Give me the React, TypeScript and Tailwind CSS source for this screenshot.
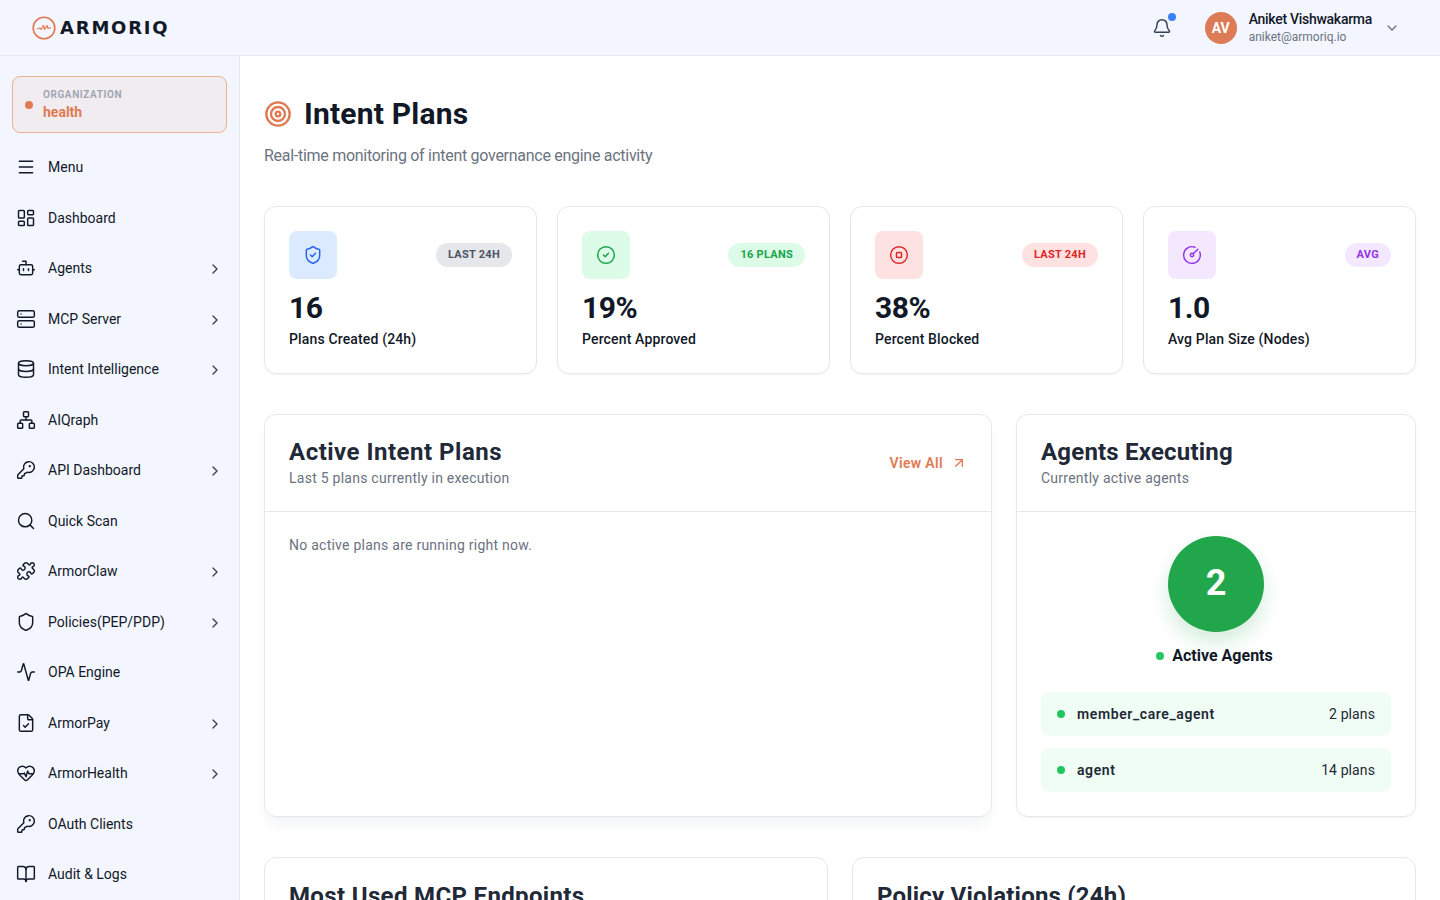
import {
  Activity,
  ArrowUpRight,
  Bell,
  BookOpen,
  Bot,
  ChevronDown,
  ChevronRight,
  CircleCheck,
  CircleGauge,
  CircleStop,
  Database,
  FileCheck,
  HeartPulse,
  KeyRound,
  LayoutDashboard,
  Menu,
  Network,
  Puzzle,
  Search,
  Server,
  Shield,
  ShieldCheck,
  Target,
} from "lucide-react";

const navItems = [
  { label: "Menu", icon: Menu },
  { label: "Dashboard", icon: LayoutDashboard },
  { label: "Agents", icon: Bot, sub: true },
  { label: "MCP Server", icon: Server, sub: true },
  { label: "Intent Intelligence", icon: Database, sub: true },
  { label: "AIQraph", icon: Network },
  { label: "API Dashboard", icon: KeyRound, sub: true },
  { label: "Quick Scan", icon: Search },
  { label: "ArmorClaw", icon: Puzzle, sub: true },
  { label: "Policies(PEP/PDP)", icon: Shield, sub: true },
  { label: "OPA Engine", icon: Activity },
  { label: "ArmorPay", icon: FileCheck, sub: true },
  { label: "ArmorHealth", icon: HeartPulse, sub: true },
  { label: "OAuth Clients", icon: KeyRound },
  { label: "Audit & Logs", icon: BookOpen },
];

const stats = [
  {
    icon: ShieldCheck,
    iconClass: "bg-[#dbeafe] text-[#2563eb]",
    badge: "LAST 24H",
    badgeClass: "bg-[#e5e7eb] text-[#4b5563]",
    value: "16",
    label: "Plans Created (24h)",
  },
  {
    icon: CircleCheck,
    iconClass: "bg-[#dcfce7] text-[#16a34a]",
    badge: "16 PLANS",
    badgeClass: "bg-[#dcfce7] text-[#16a34a]",
    value: "19%",
    label: "Percent Approved",
  },
  {
    icon: CircleStop,
    iconClass: "bg-[#fee2e2] text-[#dc2626]",
    badge: "LAST 24H",
    badgeClass: "bg-[#fee2e2] text-[#dc2626]",
    value: "38%",
    label: "Percent Blocked",
  },
  {
    icon: CircleGauge,
    iconClass: "bg-[#f3e8ff] text-[#9333ea]",
    badge: "AVG",
    badgeClass: "bg-[#f3e8ff] text-[#9333ea]",
    value: "1.0",
    label: "Avg Plan Size (Nodes)",
  },
];

const agents = [
  { name: "member_care_agent", plans: "2 plans" },
  { name: "agent", plans: "14 plans" },
];

function Logo() {
  return (
    <div className="flex items-center gap-[4px]">
      <svg width="24" height="24" viewBox="0 0 24 24" fill="none" stroke="#e07a52">
        <circle cx="12" cy="12" r="10.8" strokeWidth="1.6" />
        <path d="M5 13l3-1 1 1.5 2.5-4 1 4 2.5-4 1 3 3-1" strokeWidth="1.2" strokeLinejoin="round" />
      </svg>
      <span className="font-[family-name:'DejaVu_Sans',sans-serif] text-[18px] leading-none font-bold tracking-[1.8px] text-[#111827]">
        ARMORIQ
      </span>
    </div>
  );
}

function Sidebar() {
  return (
    <aside className="w-[240px] shrink-0 bg-[#f3f6ff] border-r border-[#e5e7eb] px-3 pt-5 overflow-hidden">
      <div className="h-[57px] flex items-center gap-[10px] pl-3 rounded-lg border border-[#efb096] bg-[#f0ecef]">
        <span className="size-2 rounded-full bg-[#e07a52]" />
        <div>
          <p className="text-[10px] leading-[14px] font-semibold tracking-[0.06em] text-[#9ca3af]">ORGANIZATION</p>
          <p className="text-sm leading-5 font-bold text-[#e07a52]">health</p>
        </div>
      </div>
      <nav className="mt-[9px]">
        {navItems.map((item) => {
          const Icon = item.icon;
          return (
            <div key={item.label} className="h-[50.5px] flex items-center text-[#111827]">
              <Icon className="size-5 ml-1 mr-3 shrink-0" strokeWidth={1.75} />
              <span className="text-sm flex-1">{item.label}</span>
              {item.sub && <ChevronRight className="size-4 mr-1 mt-[2px] text-[#374151]" />}
            </div>
          );
        })}
      </nav>
    </aside>
  );
}

export default function App() {
  return (
    <div className="h-screen overflow-hidden flex flex-col bg-white font-[family-name:Roboto,sans-serif]">
      <header className="h-14 shrink-0 bg-[#f3f6ff] border-b border-[#e5e7eb] flex items-center pl-8 pr-10">
        <Logo />
        <div className="ml-auto flex items-center">
          <div className="relative mr-[33px]">
            <Bell className="size-5 text-[#374151]" strokeWidth={1.75} />
            <span className="absolute -top-[5px] -right-[4px] size-2 rounded-full bg-[#3b82f6]" />
          </div>
          <div className="size-8 rounded-full bg-[#dc7b56] text-white text-sm font-bold flex items-center justify-center">
            AV
          </div>
          <div className="ml-3 pb-[2px]">
            <p className="text-sm leading-5 font-medium tracking-[-0.28px] text-[#111827]">Aniket Vishwakarma</p>
            <p className="text-xs leading-4 text-[#6b7280]">aniket@armoriq.io</p>
          </div>
          <ChevronDown className="size-4 ml-3 text-[#6b7280]" />
        </div>
      </header>

      <div className="flex flex-1 min-h-0">
        <Sidebar />
        <main className="flex-1 min-w-0 overflow-hidden px-6 pt-10">
          <div className="flex items-center gap-3 h-9">
            <Target className="size-7 text-[#e07a52]" strokeWidth={2} />
            <h1 className="text-3xl font-bold tracking-[0.2px] text-[#111827]">Intent Plans</h1>
          </div>
          <p className="mt-3 text-base leading-6 tracking-[-0.28px] text-[#6b7280]">
            Real-time monitoring of intent governance engine activity
          </p>

          <div className="mt-[38px] grid grid-cols-4 gap-5">
            {stats.map((stat) => {
              const Icon = stat.icon;
              return (
                <div key={stat.label} className="h-[168px] rounded-xl border border-[#e5e7eb] shadow-xs p-6">
                  <div className="flex items-center justify-between">
                    <div className={`size-12 rounded-lg flex items-center justify-center ${stat.iconClass}`}>
                      <Icon className="size-5" strokeWidth={1.75} />
                    </div>
                    <span className={`h-6 px-3 rounded-full text-[11px] font-bold tracking-wide flex items-center ${stat.badgeClass}`}>
                      {stat.badge}
                    </span>
                  </div>
                  <p className="mt-[11px] text-3xl leading-9 font-bold tracking-[-0.5px] text-[#111827]">{stat.value}</p>
                  <p className="mt-[3px] text-sm leading-5 font-medium tracking-[0.15px] text-[#111827]">{stat.label}</p>
                </div>
              );
            })}
          </div>

          <div className="mt-10 flex gap-6">
            <section className="flex-1 h-[403px] rounded-xl border border-[#e5e7eb] shadow-lg shadow-[#f3f4f6]">
              <div className="h-[97px] px-6 border-b border-[#e5e7eb] flex items-center justify-between">
                <div className="pb-[2px]">
                  <h2 className="text-2xl leading-8 font-bold tracking-[0.5px] text-[#1f2937]">Active Intent Plans</h2>
                  <p className="text-sm leading-5 tracking-[0.25px] text-[#6b7280]">Last 5 plans currently in execution</p>
                </div>
                <a className="flex items-center gap-2 text-sm font-semibold tracking-wide text-[#e07a52]">
                  View All
                  <ArrowUpRight className="size-4" />
                </a>
              </div>
              <p className="px-6 pt-[23px] text-sm leading-5 tracking-[0.25px] text-[#6b7280]">No active plans are running right now.</p>
            </section>

            <section className="w-[400px] h-[403px] rounded-xl border border-[#e5e7eb] shadow-xs">
              <div className="h-[97px] px-6 pb-[2px] border-b border-[#e5e7eb] flex flex-col justify-center">
                <h2 className="text-2xl leading-8 font-bold tracking-[0.2px] text-[#1f2937]">Agents Executing</h2>
                <p className="text-sm leading-5 tracking-[0.25px] text-[#6b7280]">Currently active agents</p>
              </div>
              <div className="px-6 pt-6">
                <div className="mx-auto size-24 rounded-full bg-[#22a64b] text-white text-4xl font-bold flex items-center justify-center pb-[2px] shadow-[0_10px_20px_rgba(34,166,75,0.2)]">
                  2
                </div>
                <div className="mt-[14px] pr-[3px] flex items-center justify-center gap-2 text-base leading-5 font-bold text-[#111827]">
                  <span className="size-2 rounded-full bg-[#22c55e]" />
                  Active Agents
                </div>
                <div className="mt-[26px] space-y-3">
                  {agents.map((agent) => (
                    <div key={agent.name} className="h-11 px-4 rounded-lg bg-[#f0fdf4] flex items-center">
                      <span className="size-2 rounded-full bg-[#22c55e] mr-3" />
                      <span className="text-sm font-semibold tracking-[0.6px] text-[#1f2937]">{agent.name}</span>
                      <span className="ml-auto text-sm tracking-[0.1px] text-[#1f2937]">{agent.plans}</span>
                    </div>
                  ))}
                </div>
              </div>
            </section>
          </div>

          <div className="mt-10 grid grid-cols-2 gap-6">
            <section className="h-[200px] rounded-xl border border-[#e5e7eb] px-6 pt-[22px]">
              <h2 className="text-2xl leading-8 font-bold tracking-[0.35px] text-[#1f2937]">Most Used MCP Endpoints</h2>
            </section>
            <section className="h-[200px] rounded-xl border border-[#e5e7eb] px-6 pt-[22px]">
              <h2 className="text-2xl leading-8 font-bold tracking-[0.2px] text-[#1f2937]">Policy Violations (24h)</h2>
            </section>
          </div>
        </main>
      </div>
    </div>
  );
}
